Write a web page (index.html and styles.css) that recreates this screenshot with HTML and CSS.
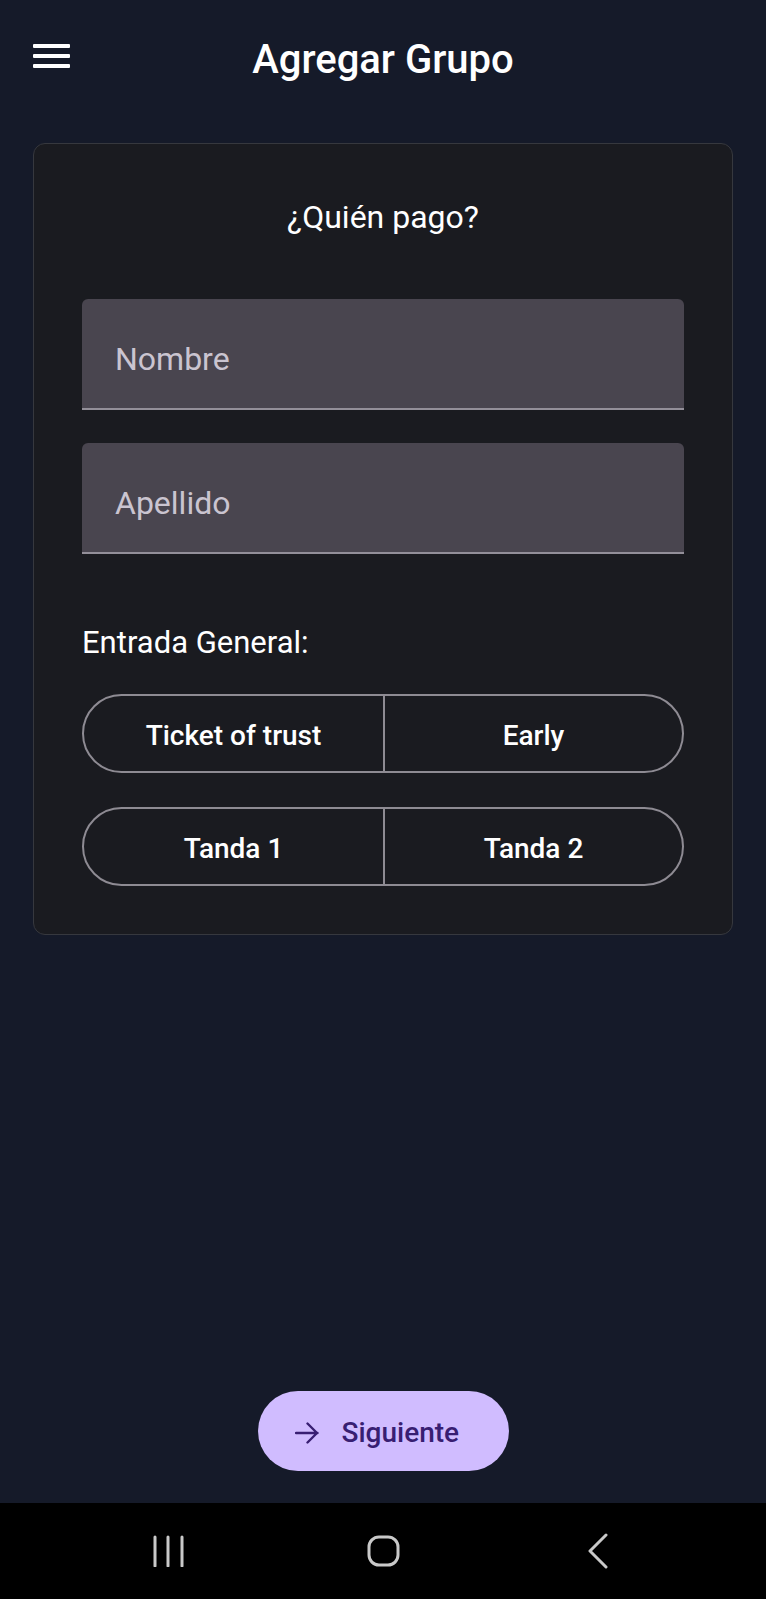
FILE: index.html
```html
<!DOCTYPE html>
<html lang="es">
<head>
<meta charset="utf-8">
<title>Agregar Grupo</title>
<link rel="stylesheet" href="styles.css">
</head>
<body>
<div class="screen">
  <header class="app-bar">
    <div class="menu-btn" aria-label="Menú">
      <span></span><span></span><span></span>
    </div>
    <h1 class="app-title">Agregar Grupo</h1>
    <div class="app-bar-end"></div>
  </header>

  <main class="content">
    <section class="card">
      <h2 class="card-title">¿Quién pago?</h2>
      <div class="field field-first"><span class="field-label">Nombre</span></div>
      <div class="field"><span class="field-label">Apellido</span></div>
      <p class="section-label">Entrada General:</p>
      <div class="segmented">
        <div class="segment">Ticket of trust</div>
        <div class="segment">Early</div>
      </div>
      <div class="segmented segmented-second">
        <div class="segment">Tanda 1</div>
        <div class="segment">Tanda 2</div>
      </div>
    </section>
  </main>

  <div class="actions">
    <button class="next-btn" type="button">
      <svg class="next-icon" viewBox="0 0 24 24" width="24" height="24" aria-hidden="true">
        <path d="M1 12H22.5M12.5 2.5L22 12L12.5 21.5" fill="none" stroke="currentColor" stroke-width="2.4" stroke-linecap="round" stroke-linejoin="round"/>
      </svg>
      <span>Siguiente</span>
    </button>
  </div>

  <nav class="system-nav">
    <div class="nav-item">
      <svg width="32" height="32" viewBox="0 0 32 32" aria-hidden="true">
        <path d="M3 2V31M16 2V31M30 2V31" stroke="#c9c9c9" stroke-width="3" stroke-linecap="round" fill="none"/>
      </svg>
    </div>
    <div class="nav-item">
      <svg width="33" height="32" viewBox="0 0 33 32" aria-hidden="true">
        <rect x="2" y="2" width="29" height="28" rx="10" ry="10" stroke="#c9c9c9" stroke-width="3" fill="none"/>
      </svg>
    </div>
    <div class="nav-item">
      <svg width="22" height="36" viewBox="0 0 22 36" aria-hidden="true">
        <path d="M19 2L3 18L19 34" stroke="#c9c9c9" stroke-width="3" stroke-linecap="round" stroke-linejoin="round" fill="none"/>
      </svg>
    </div>
  </nav>
</div>
</body>
</html>
```

FILE: styles.css
```css
* {
  box-sizing: border-box;
}

html, body {
  margin: 0;
  padding: 0;
}

body {
  background: #151a29;
  font-family: Roboto, "Noto Sans", "Liberation Sans", sans-serif;
  color: #ffffff;
}

.screen {
  width: 766px;
  height: 1599px;
  display: flex;
  flex-direction: column;
  background: #151a29;
}

/* App bar */
.app-bar {
  height: 112px;
  padding: 0 33px;
  display: grid;
  grid-template-columns: 1fr auto 1fr;
  align-items: center;
}

.menu-btn {
  width: 37px;
  display: flex;
  flex-direction: column;
  gap: 6px;
  margin-top: -1px;
}

.menu-btn span {
  display: block;
  height: 4px;
  background: #ffffff;
  border-radius: 1px;
}

.app-title {
  margin: 8px 0 0;
  font-size: 40px;
  font-weight: 500;
  line-height: 48px;
  color: #ffffff;
  letter-spacing: 0;
}

/* Card */
.content {
  padding: 31px 33px 0;
}

.card {
  background: #1a1b20;
  border: 1px solid #36383e;
  border-radius: 12px;
  padding: 53px 48px 48px;
}

.card-title {
  margin: 0;
  text-align: center;
  font-size: 32px;
  font-weight: 400;
  line-height: 40px;
  color: #ffffff;
}

.field {
  height: 111px;
  margin-top: 33px;
  background: #49454f;
  border-radius: 6px 6px 0 0;
  border-bottom: 2px solid #938f99;
  display: flex;
  align-items: center;
  padding: 11px 0 0 33px;
}

.field-first {
  margin-top: 62px;
}

.field-label {
  font-size: 32px;
  color: #cac4d0;
  line-height: 40px;
}

.section-label {
  margin: 71px 0 0;
  font-size: 31px;
  line-height: 36px;
  color: #ffffff;
}

.segmented {
  margin-top: 33px;
  height: 79px;
  border: 2px solid #8e8b93;
  border-radius: 40px;
  display: grid;
  grid-template-columns: 1fr 1fr;
  overflow: hidden;
}

.segmented-second {
  margin-top: 34px;
}

.segment {
  display: flex;
  align-items: center;
  justify-content: center;
  padding-top: 4px;
  font-size: 28px;
  font-weight: 500;
  color: #ffffff;
}

.segment + .segment {
  border-left: 2px solid #8e8b93;
}

/* Action button */
.actions {
  margin-top: auto;
  margin-bottom: 32px;
  display: flex;
  justify-content: center;
}

.next-btn {
  width: 251px;
  height: 80px;
  border: none;
  border-radius: 40px;
  background: #d0bcff;
  color: #381e72;
  display: flex;
  align-items: center;
  gap: 23px;
  padding: 3px 0 0 37px;
  font-family: Roboto, "Noto Sans", "Liberation Sans", sans-serif;
  font-size: 28px;
  font-weight: 500;
}

.next-icon {
  flex: none;
}

/* System navigation */
.system-nav {
  height: 96px;
  background: #000000;
  display: grid;
  grid-template-columns: repeat(3, 215px);
  justify-content: center;
  align-items: center;
}

.nav-item {
  display: flex;
  justify-content: center;
  align-items: center;
}

.nav-item svg {
  display: block;
}
```
